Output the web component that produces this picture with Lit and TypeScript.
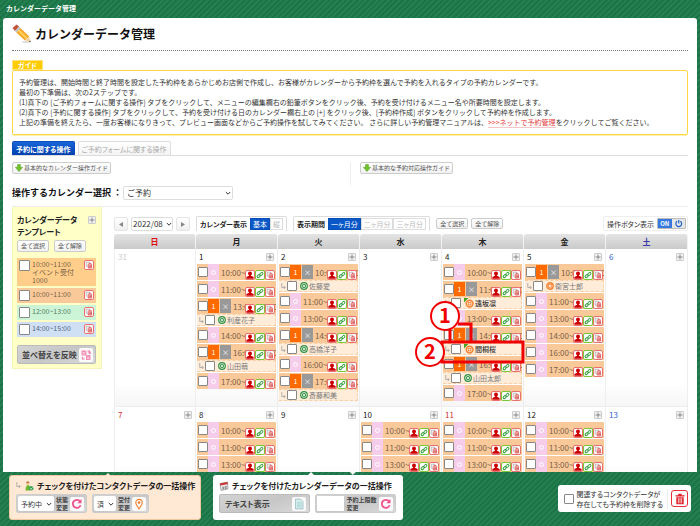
import { LitElement, html, css, svg, nothing } from "lit";
import { customElement, property } from "lit/decorators.js";
import { classMap } from "lit/directives/class-map.js";

type Mark = "done" | "new" | "orange";
interface Guest { name: string; mark: Mark; callout?: boolean }
interface Slot { from: string; to: string; guest?: Guest }
interface Day { n: number; kind?: string; add?: boolean; slots?: Slot[] }

const s = (from: number, guest?: Guest): Slot => ({ from: `${from}:00`, to: `${from + 1}:00`, guest });
const g = (name: string, mark: Mark = "done", callout = false): Guest => ({ name, mark, callout });
const morning = () => [s(10), s(11), s(13)];

const WEEKS: Day[][] = [
  [
    { n: 31, kind: "out", add: false },
    { n: 1, slots: [s(10), s(11), s(13, g("利産花子")), s(14), s(16, g("山田萌")), s(17)] },
    { n: 2, slots: [s(10, g("佐藤愛")), s(11), s(13), s(14, g("高橋洋子")), s(16), s(17, g("斎藤和美"))] },
    { n: 3 },
    { n: 4, slots: [s(10), s(11, g("遠坂凛", "new")), s(13), s(14, g("間桐桜", "new", true)), s(16, g("山田太郎")), s(17)] },
    { n: 5, slots: [s(10, g("衛宮士郎", "orange")), s(11), s(13), s(14), s(16), s(17)] },
    { n: 6, kind: "sat" },
  ],
  [
    { n: 7, kind: "sun" },
    { n: 8, slots: morning() },
    { n: 9 },
    { n: 10, slots: morning() },
    { n: 11, kind: "sun", slots: morning() },
    { n: 12, slots: morning() },
    { n: 13, kind: "sat" },
  ],
];

const copyGlyph = svg`<path d="M1.500 1.500h4.500v1.500M1.500 1.500v5h1.500" fill="none" stroke="#999" stroke-width=".8"/>
  <path d="M3.400 3.900h5.400M5.200 3h1.800M4 4.700v4h4.200v-4M5.400 5.200v2.900M6.800 5.200v2.900" fill="none" stroke="#d22a2a" stroke-width=".9"/>`;

const icons = {
  user: html`<svg viewBox="0 0 10 10"><circle cx="5" cy="3" r="2.500" fill="#c00"/><path d="M3.800 4.500h2.400v1.300L9.500 7.400V9.700H.5V7.400L3.800 5.800z" fill="#c00"/></svg>`,
  link: html`<svg viewBox="0 0 10 10"><g fill="none" stroke="#2f9e3a" stroke-width="1.200"><rect x="4.400" y="2.400" width="4.400" height="2.700" rx="1.300" transform="rotate(-45 6.600 3.700)"/><rect x="1.200" y="5" width="4.400" height="2.700" rx="1.300" transform="rotate(-45 3.400 6.400)"/></g></svg>`,
  copy: html`<svg viewBox="0 0 10 10">${copyGlyph}</svg>`,
  down: html`<svg class="i8" viewBox="0 0 8 8"><path d="M2.600.4h2.800v2.900h2.200L4 7.600.4 3.300h2.200z" fill="#72c02c" stroke="#4a9a18" stroke-width=".5"/></svg>`,
  chev: html`<svg class="chev" viewBox="0 0 6 6"><path d="M.8 2 3 4.200 5.200 2" fill="none" stroke="#333" stroke-width="1"/></svg>`,
  redo: html`<svg viewBox="0 0 12 12"><path d="M9.600 7.200A4 4 0 1 1 9 3.400" fill="none" stroke="#f0508c" stroke-width="1.800"/><path d="M10.500 1v4.200H6.300z" fill="#f0508c"/></svg>`,
  pin: html`<svg viewBox="0 0 12 12"><path d="M6 11C3.800 8 2.800 6.500 2.800 4.600a3.200 3.200 0 0 1 6.400 0C9.200 6.500 8.200 8 6 11z" fill="none" stroke="#f08030" stroke-width="1.100"/><circle cx="6" cy="4.600" r="1.300" fill="#f08030"/></svg>`,
  doc: html`<svg viewBox="0 0 12 12"><path d="M2.500 1h5l2.500 2.500V11H2.500z" fill="#d5ecec" stroke="#8fb5b8" stroke-width=".7"/><path d="M4 4.500h4.500M4 6h4.500M4 7.500h4.500M4 9h4.500" stroke="#9cc" stroke-width=".6"/></svg>`,
  sort: html`<svg viewBox="0 0 12 12"><path d="M1.500 1.500h4l1 1v4h-5zM6 6h4.500v5H6z" fill="#f48fb5"/><path d="M7.500 2h2.200v2.500M8.400 3.500l1.300 1.300L11 3.500M4.500 10H2.300V7.800" fill="none" stroke="#ee5a92" stroke-width=".9"/><path d="M2.500 3.500h2.700M2.500 5h2.700M7 8h2.500M7 9.500h2.500" stroke="#fff" stroke-width=".5"/></svg>`,
  power: html`<svg viewBox="0 0 10 10"><path d="M3.200 2.600a3.200 3.200 0 1 0 3.600 0M5 1v4" fill="none" stroke="#1a5fd0" stroke-width="1.300"/></svg>`,
  trash: html`<svg viewBox="0 0 12 12"><path d="M1.500 2.200h9v1.300h-9zM4.300.8h3.400v1.400H4.300zM2.300 4.200h7.400v7H2.300z" fill="#e0202a"/><path d="M4.400 5v5.300M6 5v5.300M7.600 5v5.300" stroke="#fff" stroke-width=".7"/></svg>`,
  pencil: html`<svg class="pencil" viewBox="0 0 20 20"><ellipse cx="14" cy="18" rx="4" ry="1" fill="#ddd"/><path d="M.5 4 4.500.5l2.700 2.300-4.300 4.200z" fill="#c4553f"/><path d="M2.900 7 7.200 2.800l1.500 1.400-4.300 4.200z" fill="#b9c3c8"/><path d="M4.400 8.400 8.700 4.200l8.500 8.300-4.200 4z" fill="#f5a823"/><path d="M5.900 6.900 7.300 5.600l8.400 8.300-1.400 1.300z" fill="#ffd067"/><path d="M13 16.500l4.200-4 1.300 5.700z" fill="#f1d3a5"/><path d="m16.900 17.700 1.300-1.200.4 1.800z" fill="#333"/></svg>`,
  contact: html`<svg class="i10" viewBox="0 0 10 10"><circle cx="3.800" cy="2" r="1.600" fill="#f0b070"/><path d="M2 1.500A2 1.700 0 0 1 5.600 1.500z" fill="#8a5a20"/><path d="M1.500 9.500c0-3 .8-5.600 2.400-5.600s2.200 2 2.300 5.600z" fill="#6cb82c"/><circle cx="7.200" cy="7.300" r="2.300" fill="#3aa050"/><path d="M6 7.300l1 1 1.500-2" stroke="#fff" fill="none" stroke-width=".7"/></svg>`,
  cal: html`<svg class="i10" viewBox="0 0 10 10"><path d="M1 2.500 8.500 1l.5 7L2 9.300z" fill="#eee" stroke="#777" stroke-width=".6"/><path d="M1 2.500 8.500 1l.2 2.200-7.500 1.300z" fill="#c33"/><path d="M3 6h1.500v2H3M6 5.500h1.300V7.500H6z" stroke="#555" stroke-width=".6" fill="none"/></svg>`,
  done: html`<svg class="i8" viewBox="0 0 8 8"><circle cx="4" cy="4" r="3.900" fill="#2f8f3f"/><circle cx="4" cy="4" r="2.500" fill="none" stroke="#fff" stroke-width=".7"/><circle cx="4" cy="4" r="1" fill="#fff"/></svg>`,
  orange: html`<svg class="i8" viewBox="0 0 8 8"><circle cx="4" cy="4" r="3.200" fill="#ffe0c8" stroke="#f58233" stroke-width="1.400"/><rect x="2.600" y="2.600" width="2.800" height="2.800" fill="none" stroke="#f58233" stroke-width=".7"/></svg>`,
  fresh: html`<svg class="i10" viewBox="0 0 10 10"><circle cx="5.600" cy="5.600" r="3.400" fill="#ffe0c8" stroke="#f58233" stroke-width="1.500"/><rect x="4.300" y="4.300" width="2.600" height="2.600" fill="none" stroke="#f58233" stroke-width=".8"/><path d="M0 0h4.500L0 4.500z" fill="#46a21c"/></svg>`,
  elbow: html`<svg class="elbow" viewBox="0 0 5 7"><path d="M.8 0v4.500H4M2.800 3l1.500 1.500L2.800 6" fill="none" stroke="#aaa" stroke-width=".9"/></svg>`,
};

const base = css`
  * { box-sizing: border-box; }
  svg { display: block; }
  button, select, input { font: inherit; color: inherit; margin: 0; padding: 0; border-radius: 0; font-feature-settings: inherit; }
  input[type="checkbox"] { appearance: none; flex: none; width: 10px; height: 10px; background: #fff; border: 1px solid #888; border-radius: 1px; }
  .i8 { width: 8px; height: 8px; flex: none; }
  .i10 { width: 10px; height: 10px; flex: none; }
  .ico { flex: none; width: 10px; height: 10px; background: #fff; border: 1px solid #ea7070; border-radius: 2px; }
  .ico svg { width: 100%; height: 100%; }
  .ico.green { border-color: #7cc832; }
  .plus { display: grid; place-items: center; width: 8px; height: 8px; background: #f2f2f2; border: 1px solid #ccc; border-radius: 1px; }
  .plus svg { width: 6px; height: 6px; }
`;

const plus = (label: string) => html`<button class="plus" aria-label=${label}>
  <svg viewBox="0 0 6 6"><path d="M3 .5v5M.5 3h5" stroke="#888" stroke-width="1"/></svg></button>`;

@customElement("time-slot")
export class TimeSlot extends LitElement {
  @property({ attribute: false }) slotData!: Slot;

  static styles = [base, css`
    :host { display: block; }
    .row { position: relative; display: flex; align-items: center; height: 16px; padding: 0 1px; background: #fac999; overflow: hidden; white-space: nowrap; }
    .state { display: grid; place-items: center; flex: none; width: 11px; height: 16px; background: #f5cdea; }
    .state i { width: 5px; height: 5px; border: 1px solid #fff; border-radius: 50%; }
    .count, .full { display: grid; place-items: center; flex: none; width: 11px; height: 14px; color: #fff; font-size: 7px; }
    .count { background: #ff6a00; }
    .full { background: #999; margin-left: 1px; }
    .time { margin-left: 2px; padding-top: 2px; font-size: 8px; line-height: 14px; color: #775f48; }
    .acts { position: absolute; right: 1px; bottom: 0; display: flex; }
    .sub { position: relative; display: flex; align-items: center; height: 12px; padding-left: 2px; background: #ffecd9; border: 1px dashed #fbcfa6; border-left: 0; color: #777; white-space: nowrap; }
    .elbow { flex: none; width: 5px; height: 7px; margin-right: 1px; }
    .who { display: flex; align-items: center; gap: 1px; margin-left: 3px; font-size: 7px; line-height: 10px; }
    .who.fresh { color: #333; font-weight: 500; }
    .note { position: absolute; left: -29px; top: -44px; width: 112px; height: 69px; z-index: 3; overflow: visible; pointer-events: none; }
    .note text { font: 700 20px "Noto Sans CJK JP", sans-serif; fill: #f00000; text-anchor: middle; }
  `];

  private callout() {
    return html`<svg class="note" viewBox="0 0 112 69">
      <g fill="none" stroke="#f00000">
        <path d="M44 24H57V42M36 26V42" stroke-width="3"/>
        <rect x="28" y="42" width="81" height="20" stroke-width="3"/>
        <circle cx="31" cy="16" r="14" fill="#fff" stroke-width="2"/>
        <circle cx="16" cy="52" r="14" fill="#fff" stroke-width="2"/>
      </g>
      <text x="31" y="23">1</text><text x="16" y="59">2</text>
    </svg>`;
  }

  render() {
    const { from, to, guest } = this.slotData;
    return html`
      <div class="row">
        <input type="checkbox" aria-label="${from}の予約枠">
        ${guest ? html`<span class="count">1</span><span class="full">×</span>` : html`<span class="state"><i></i></span>`}
        <span class="time">${from}~${to}</span>
        <span class="acts">
          <button class="ico" aria-label="予約者">${icons.user}</button>
          <button class="ico green" aria-label="リンク">${icons.link}</button>
          <button class="ico" aria-label="複製・削除">${icons.copy}</button>
        </span>
      </div>
      ${guest ? html`<div class="sub">
        ${icons.elbow}<input type="checkbox" aria-label=${guest.name}>
        <span class=${classMap({ who: true, fresh: guest.mark === "new" })}>
          ${guest.mark === "done" ? icons.done : guest.mark === "new" ? icons.fresh : icons.orange}${guest.name}</span>
        ${guest.callout ? this.callout() : nothing}
      </div>` : nothing}`;
  }
}

@customElement("month-calendar")
export class MonthCalendar extends LitElement {
  static styles = [base, css`
    :host { display: block; }
    table { width: 100%; table-layout: fixed; border-collapse: separate; border-spacing: 0; }
    th { height: 15px; padding: 0; font-size: 8px; line-height: 15px; color: #222; background: linear-gradient(#e4e4e4, #cacaca); border-right: 1px solid #f2f2f2; border-radius: 3px 3px 0 0; }
    th.sun { color: #e01010; }
    th.sat { color: #3a3aa8; }
    td { padding: 1px 1px 5px; vertical-align: top; border-right: 1px solid #eee; border-bottom: 1px solid #eee; background: linear-gradient(#fff 85%, #f6f6f6); }
    td:first-child { border-left: 1px solid #eee; }
    .head { display: flex; align-items: center; justify-content: space-between; height: 14px; padding: 0 2px; font-size: 8px; line-height: 14px; color: #222; }
    .out { color: #ccc; }
    .sun .head { color: #d03030; }
    .sat .head { color: #3060d0; }
    .list { display: flex; flex-direction: column; gap: 1px; }
  `];

  render() {
    const names = ["日", "月", "火", "水", "木", "金", "土"];
    return html`<table>
      <thead><tr>${names.map((n, i) => html`<th class=${i === 0 ? "sun" : i === 6 ? "sat" : ""}>${n}</th>`)}</tr></thead>
      <tbody>${WEEKS.map(w => html`<tr>${w.map(d => html`<td class=${d.kind ?? ""}>
        <div class=${classMap({ head: true, out: d.kind === "out" })}><span>${d.n}</span>${d.add === false ? nothing : plus(`${d.n}日に追加`)}</div>
        <div class="list">${(d.slots ?? []).map(x => html`<time-slot .slotData=${x}></time-slot>`)}</div>
      </td>`)}</tr>`)}</tbody>
    </table>`;
  }
}

@customElement("app-root")
export class AppRoot extends LitElement {
  static styles = [base, css`
    :host {
      display: flex; flex-direction: column; height: 100vh; overflow: hidden;
      font-family: "Noto Sans CJK JP", sans-serif; font-size: 7px; line-height: 10px; color: #333;
      font-feature-settings: "palt";
      background: repeating-linear-gradient(135deg, #1b7346 0 2px, #247f51 2px 4px);
    }
    .bar, .title, .guide, .pick, .btn { font-feature-settings: normal; }
    .bar { flex: none; height: 18px; padding: 0 6px; line-height: 16px; font-weight: 700; color: #fff; }
    main { flex: 1; min-height: 0; overflow: hidden; margin: 0 3px; padding: 0 9px; background: #fff; border-radius: 3px 3px 0 0; }
    .title { display: flex; align-items: center; gap: 3px; height: 33px; margin: 0 0 9px; border-bottom: 1px dotted #777; font-size: 12px; line-height: 16px; color: #111; }
    .pencil { width: 20px; height: 20px; }
    .tag { display: inline-block; height: 10px; padding: 0 5px; font-weight: 700; color: #fff; background: #fc0; border: 1px solid #ffe27a; line-height: 9px; vertical-align: top; }
    .guide { border: 1px solid #fdd545; border-radius: 2px; padding: 6px 6px 7px; box-shadow: 0 1px 0 #fff0b0; }
    .guide p { margin: 0; white-space: nowrap; }
    .guide a { color: #e23c3c; text-decoration: none; border-bottom: 1px solid #f7c5c5; }
    .tabs { display: flex; gap: 3px; margin-top: 6px; border-bottom: 1px solid #ddd; }
    .tab { height: 14px; padding: 0 3px; background: linear-gradient(#fff, #f4f4f4); border: 1px solid #ddd; border-bottom: 0; border-radius: 2px 2px 0 0; color: #aaa; white-space: nowrap; }
    .tab.on { background: linear-gradient(#1a66d8, #003fae); border-color: #0a4fbc; color: #fff; font-weight: 700; }
    .tips { display: grid; grid-template-columns: 1fr 1fr; padding-top: 6px; }
    .tips div { height: 23px; }
    .tips div + div { border-left: 1px solid #eee; padding-left: 9px; }
    .btn { display: inline-flex; align-items: center; gap: 1px; height: 12px; padding: 0 2px; background: linear-gradient(#fff, #f0f0f0); border: 1px solid #ccc; border-radius: 2px; color: #555; font-size: 6px; white-space: nowrap; }
    .pick { display: flex; align-items: center; gap: 1px; height: 22px; border-bottom: 1px solid #eee; padding-bottom: 6px; font-size: 9px; color: #111; }
    .pick label { font-weight: 700; white-space: nowrap; }
    .sel { display: inline-grid; align-items: center; }
    .sel select { grid-area: 1 / 1; width: 100%; appearance: none; background: #fff; border: 1px solid #ddd; border-radius: 2px; font-size: 8px; line-height: 12px; height: 14px; padding: 0 9px 0 3px; color: #333; }
    .chev { grid-area: 1 / 1; justify-self: end; width: 6px; height: 6px; margin-right: 2px; pointer-events: none; }
    .sel.wide { width: 110px; }
    .sel.month { width: 42px; }
    .sel.month select { padding: 0 7px 0 1px; }
    .sel.month .chev { margin-right: 1px; }
    .work { display: grid; grid-template-columns: 90px minmax(0, 1fr); gap: 12px; align-items: start; }
    aside { padding: 7px 5px 4px 4px; background: #ffffc8; border: 1px solid #f5f5b8; border-top: 0; }
    .side-head { display: flex; justify-content: space-between; align-items: flex-start; }
    .side-head h2 { margin: 0; font-size: 8px; line-height: 12px; color: #222; }
    .side-head .plus { margin-top: 2px; }
    .pair { display: flex; gap: 5px; margin: 2px 0 6px; }
    .pair .btn { padding: 0 3px; }
    .tpl { display: flex; align-items: flex-start; gap: 2px; min-height: 15px; margin-bottom: 2px; padding: 2px; color: #775f48; line-height: 8px; background: #fac999; font-feature-settings: normal; }
    .tpl input[type="checkbox"] { width: 11px; height: 11px; }
    .tpl label { flex: 1; white-space: nowrap; }
    .tpl b { display: block; font-weight: 400; }
    .tpl.event { background: #ffce8a; min-height: 27px; }
    .tpl.mint { background: #ccf5d8; color: #557a60; }
    .tpl.blue { background: #cfe0f5; color: #55657a; }
    .metal { display: flex; align-items: center; justify-content: space-between; gap: 4px; height: 19px; padding: 0 3px 0 5px; background: linear-gradient(160deg, #d4d4d4, #c6c6c6 50%, #dadada); border: 1px solid #bbb; border-radius: 2px; font-size: 8px; font-weight: 700; color: #444; white-space: nowrap; }
    .apply { width: 100%; margin-top: 8px; gap: 2px; padding: 0 2px 0 4px; }
    .tile { flex: none; display: grid; place-items: center; width: 14px; height: 14px; padding: 1px; border: 0; border-radius: 2px; background: #fafafa; }
    .tile svg { width: 12px; height: 12px; }
    .tools { display: flex; align-items: flex-end; gap: 3px; height: 24px; margin-bottom: 3px; }
    .nav { flex: none; width: 14px; height: 14px; background: linear-gradient(#fff, #f0f0f0); border: 1px solid #e4e4e4; border-radius: 2px; display: grid; place-items: center; }
    .nav svg { width: 4px; height: 5px; }
    .seg { display: flex; align-items: center; gap: 0; height: 15px; padding: 0 3px; margin-left: 3px; border: 1px solid #ddd; border-bottom: 0; border-radius: 2px 2px 0 0; white-space: nowrap; }
    .seg b { margin-right: 3px; color: #222; }
    .seg button { height: 12px; padding: 0 2px; border: 1px solid #ddd; background: #fff; color: #bbb; }
    .seg button.on { background: #0a58c8; border-color: #0a4fb4; color: #fff; }
    .tools .btn { margin-left: 3px; margin-bottom: 2px; height: 11px; padding: 0 3px; }
    .tools .btn + .btn { margin-left: 0; }
    .ops { display: flex; align-items: center; gap: 3px; height: 15px; padding: 0 1px 0 3px; margin-left: auto; border: 1px solid #eee; border-radius: 2px; white-space: nowrap; }
    .switch { display: flex; width: 29px; height: 11px; border: 1px solid #bbb; background: #e6e6e6; border-radius: 1px; }
    .switch span { flex: 1; background: #3478e0; color: #fff; line-height: 9px; font-size: 6px; font-weight: 700; }
    .switch svg { flex: 1; height: 9px; }
    footer { flex: none; display: flex; align-items: flex-start; gap: 12px; height: 54px; padding: 3px 9px 0; }
    .card { position: relative; padding: 5px 6px 7px; border-radius: 3px; background: #fff; }
    .card h3 { display: flex; align-items: center; gap: 3px; margin: 0 0 3px; font-size: 8px; line-height: 11px; color: #222; white-space: nowrap; }
    .card.peach { background: #ffe8d4; border: 1px solid #f0c8a0; padding: 4px 6px 6px; width: 192px; }
    .card.white { width: 190px; }
    .elbow { flex: none; width: 5px; height: 7px; }
    .tip { position: absolute; top: -3px; width: 6px; height: 3px; background: inherit; clip-path: polygon(50% 0, 100% 100%, 0 100%); }
    .tip.mid { left: 50%; }
    .tip.down { left: 72%; background: #fff; clip-path: polygon(0 0, 100% 0, 50% 100%); }
    .group { display: flex; gap: 5px; }
    .metal.set { padding: 0 2px 0 1px; gap: 2px; border-color: #ccc; }
    .metal small { font-size: 6px; line-height: 8px; white-space: nowrap; }
    .metal .sel select { height: 15px; border: 0; font-weight: 400; }
    .metal .sel.status { width: 36px; }
    .metal .sel.recv { width: 22px; }
    .metal .sel.status select, .metal .sel.recv select { font-size: 7px; }
    .limit { width: 27px; height: 15px; border: 0; background: #fff; }
    .text { width: 91px; }
    .nums { width: 81px; }
    .remove { display: flex; align-items: center; gap: 3px; margin: 10px 0 0 auto; height: 27px; padding: 0 3px 0 6px; background: #fff; border-radius: 3px; }
    .remove label { line-height: 10px; white-space: nowrap; padding-right: 4px; border-right: 1px solid #eee; }
    .bin { display: grid; place-items: center; width: 17px; height: 17px; background: #fff; border: 1px solid #e8303a; border-radius: 3px; }
    .bin svg { width: 12px; height: 12px; }
  `];

  private tpl(id: string, time: string, kind: string, name?: string, cap?: string) {
    return html`<div class="tpl ${kind}"><input type="checkbox" id=${id}>
      <label for=${id}>${time}${name ? html`<b>${name}</b><b>${cap}</b>` : nothing}</label>
      <button class="ico" aria-label="削除">${icons.copy}</button></div>`;
  }

  render() {
    return html`
      <header class="bar">カレンダーデータ管理</header>
      <main>
        <h1 class="title">${icons.pencil}カレンダーデータ管理</h1>
        <span class="tag">ガイド</span>
        <section class="guide">
          <p>予約管理は、開始時間と終了時間を設定した予約枠をあらかじめお店側で作成し、お客様がカレンダーから予約枠を選んで予約を入れるタイプの予約カレンダーです。</p>
          <p>最初の下準備は、次の2ステップです。</p>
          <p>(1)真下の [ご予約フォームに関する操作] タブをクリックして、メニューの編集欄右の鉛筆ボタンをクリック後、予約を受け付けるメニュー名や所要時間を設定します。</p>
          <p>(2)真下の [予約に関する操作] タブをクリックして、予約を受け付ける日のカレンダー欄右上の [+] をクリック後、[予約枠作成] ボタンをクリックして予約枠を作成します。</p>
          <p>上記の準備を終えたら、一度お客様になりきって、プレビュー画面などからご予約操作を試してみてください。 さらに詳しい予約管理マニュアルは、<a href="#manual">&gt;&gt;&gt;ネットで予約管理</a>をクリックしてご覧ください。</p>
        </section>
        <nav class="tabs">
          <button class="tab on">予約に関する操作</button>
          <button class="tab">ご予約フォームに関する操作</button>
        </nav>
        <div class="tips">
          <div><button class="btn">${icons.down}基本的なカレンダー操作ガイド</button></div>
          <div><button class="btn">${icons.down}基本的な予約対応操作ガイド</button></div>
        </div>
        <div class="pick">
          <label for="cal">操作するカレンダー選択 ：</label>
          <span class="sel wide"><select id="cal"><option>ご予約</option></select>${icons.chev}</span>
        </div>
        <div class="work">
          <aside>
            <div class="side-head"><h2>カレンダーデータ<br>テンプレート</h2>${plus("テンプレートを追加")}</div>
            <div class="pair"><button class="btn">全て選択</button><button class="btn">全て解除</button></div>
            ${this.tpl("t1", "10:00~11:00", "event", "イベント受付", "1000")}
            ${this.tpl("t2", "10:00~11:00", "")}
            ${this.tpl("t3", "12:00~13:00", "mint")}
            ${this.tpl("t4", "14:00~15:00", "blue")}
            <button class="metal apply">並べ替えを反映<span class="tile">${icons.sort}</span></button>
          </aside>
          <section>
            <div class="tools">
              <button class="nav" aria-label="前の月"><svg viewBox="0 0 4 5"><path d="M4 0v5L0 2.500z" fill="#888"/></svg></button>
              <span class="sel month"><select aria-label="表示月"><option>2022/08</option></select>${icons.chev}</span>
              <button class="nav" aria-label="次の月"><svg viewBox="0 0 4 5"><path d="M0 0v5l4-2.500z" fill="#888"/></svg></button>
              <div class="seg"><b>カレンダー表示</b><button class="on">基本</button><button>縦</button></div>
              <div class="seg"><b>表示期間</b><button class="on">一ヶ月分</button><button>二ヶ月分</button><button>三ヶ月分</button></div>
              <button class="btn">全て選択</button><button class="btn">全て解除</button>
              <div class="ops">操作ボタン表示<button class="switch" aria-label="操作ボタン表示"><span>ON</span>${icons.power}</button></div>
            </div>
            <month-calendar></month-calendar>
          </section>
        </div>
      </main>
      <footer>
        <section class="card peach"><i class="tip mid"></i>
          <h3>${icons.elbow}${icons.contact}チェックを付けたコンタクトデータの一括操作</h3>
          <div class="group">
            <div class="metal set"><span class="sel status"><select aria-label="状態"><option>予約中</option></select>${icons.chev}</span><small>状態<br>変更</small><button class="tile" aria-label="状態変更">${icons.redo}</button></div>
            <div class="metal set"><span class="sel recv"><select aria-label="受付"><option>済</option></select>${icons.chev}</span><small>受付<br>変更</small><button class="tile" aria-label="受付変更">${icons.pin}</button></div>
          </div>
        </section>
        <section class="card white"><i class="tip mid"></i><i class="tip down"></i>
          <h3>${icons.cal}チェックを付けたカレンダーデータの一括操作</h3>
          <div class="group">
            <button class="metal text">テキスト表示<span class="tile">${icons.doc}</span></button>
            <div class="metal set nums"><input class="limit" type="text" aria-label="予約上限数"><small>予約上限数<br>変更</small><button class="tile" aria-label="予約上限数変更">${icons.redo}</button></div>
          </div>
        </section>
        <section class="remove">
          <input type="checkbox" id="rel"><label for="rel">関連するコンタクトデータが<br>存在しても予約枠を削除する</label>
          <button class="bin" aria-label="削除">${icons.trash}</button>
        </section>
      </footer>`;
  }
}
